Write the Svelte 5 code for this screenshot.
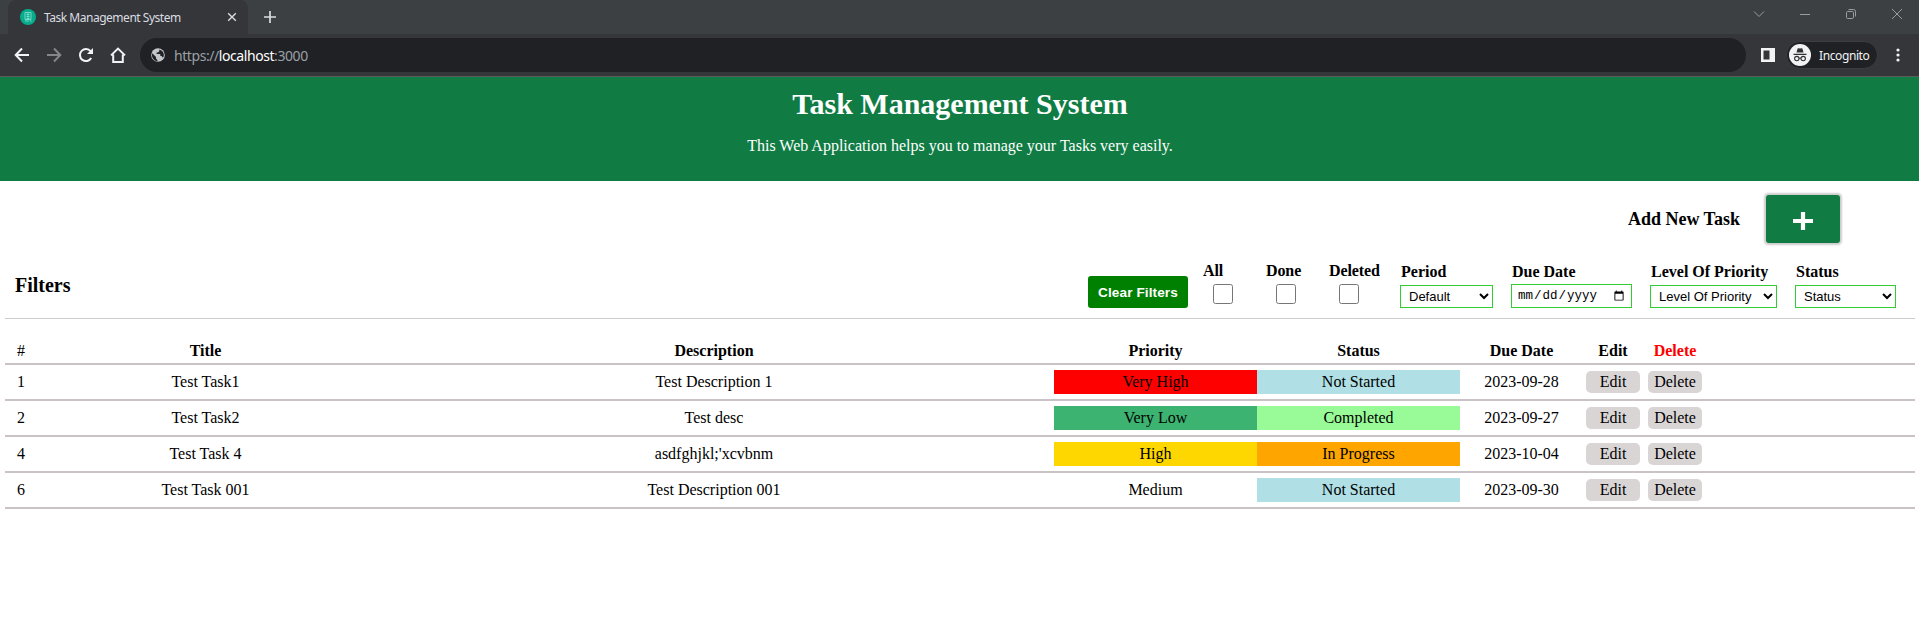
<script>
  const tasks = [
    { id: 1, title: 'Test Task1', description: 'Test Description 1', priority: 'Very High', status: 'Not Started', due: '2023-09-28' },
    { id: 2, title: 'Test Task2', description: 'Test desc', priority: 'Very Low', status: 'Completed', due: '2023-09-27' },
    { id: 4, title: 'Test Task 4', description: "asdfghjkl;'xcvbnm", priority: 'High', status: 'In Progress', due: '2023-10-04' },
    { id: 6, title: 'Test Task 001', description: 'Test Description 001', priority: 'Medium', status: 'Not Started', due: '2023-09-30' }
  ];
  const checks = ['All', 'Done', 'Deleted'];
  const slug = (s) => s.toLowerCase().replace(' ', '-');
</script>

<div class="tabstrip">
  <div class="tab">
    <svg class="favicon" width="16" height="16" viewBox="0 0 16 16"><circle cx="8" cy="8" r="8" fill="#06ac8c" /><path d="M5 3.5h6v7H5zM6.5 5.5h3M6.5 7.5h3M6.5 9.5h3M5 12h4M10 11.5l1.5 1M8 3.500v7" fill="none" stroke="#7fdccb" stroke-width=".9" /></svg>
    <span class="tab-title">Task Management System</span>
    <svg class="tab-close" width="10" height="10" viewBox="0 0 10 10"><path d="M1.2 1.2l7.6 7.6M8.8 1.2L1.2 8.8" stroke="#dadce0" stroke-width="1.4" /></svg>
  </div>
  <svg class="newtab" width="12" height="12" viewBox="0 0 12 12"><path d="M6 0v12M0 6h12" stroke="#dadce0" stroke-width="1.7" /></svg>
  <div class="controls">
    <svg width="12" height="12" viewBox="0 0 12 12"><path d="M1 3.5l5 5 5-5" /></svg>
    <svg width="12" height="12" viewBox="0 0 12 12"><path d="M1 6.5h10" /></svg>
    <svg width="12" height="12" viewBox="0 0 12 12"><rect x="1.5" y="3.5" width="7" height="7" rx="1.2" /><path d="M3.5 1.5H8.500a2 2 0 0 1 2 2V8.500" /></svg>
    <svg width="12" height="12" viewBox="0 0 12 12"><path d="M1 1l10 10M11 1L1 11" /></svg>
  </div>
</div>
<div class="toolbar">
  <svg class="nav" width="16" height="16" viewBox="0 0 16 16"><path d="M15 8H2M8 1.500L1.700 8 8 14.500" /></svg>
  <svg class="nav dim" width="16" height="16" viewBox="0 0 16 16"><path d="M1 8h13M8 1.500L14.300 8 8 14.500" /></svg>
  <svg class="nav" width="16" height="16" viewBox="0 0 16 16"><path d="M13.200 11A6 6 0 1 1 12.600 4.200" /><path d="M15 1v6H9z" fill="#f1f3f4" stroke="none" /></svg>
  <svg class="nav" width="16" height="16" viewBox="0 0 16 16"><path d="M1 8.400L8 1.600l7 6.800M3.200 7.500V15h9.600V7.500" /></svg>
  <div class="omnibox">
    <svg width="14" height="14" viewBox="0 0 14 14"><circle cx="7" cy="7" r="6.800" fill="#c4c7ca" /><path d="M1.300 5.300L5 9v1.400l1.500 1.800v1A6 6 0 0 1 1.300 5.300zM8.300 1.500v1.700L7 4.500H5.600V6h3.700v2h1.300l1.300 1.800c1.800-2.400 1.300-6.600-3.600-8.300z" fill="#202124" /></svg>
    <span class="url">https://<b>localhost</b>:3000</span>
  </div>
  <svg class="panel" width="14" height="14" viewBox="0 0 14 14"><path d="M0 0h14v14H0zM2.500 2.500v9h6v-9z" fill="#f1f3f4" fill-rule="evenodd" /></svg>
  <div class="profile">
    <svg width="22" height="22" viewBox="0 0 22 22"><circle cx="11" cy="11" r="11" fill="#f1f3f4" /><path d="M7.500 8.500L8.500 4.700q.2-.7 1-.5L11 4.600l1.500-.4q.8-.2 1 .5l1 3.800zM4.500 9.700h13v1.200h-13z" fill="#303134" /><g fill="none" stroke="#303134" stroke-width="1.100"><circle cx="7.800" cy="14.600" r="2.200" /><circle cx="14.200" cy="14.600" r="2.200" /><path d="M10 14.400q1-.7 2 0" /></g></svg>
    <span>Incognito</span>
  </div>
  <svg class="more" width="4" height="14" viewBox="0 0 4 14" fill="#f1f3f4"><circle cx="2" cy="2" r="1.600" /><circle cx="2" cy="7" r="1.600" /><circle cx="2" cy="12" r="1.600" /></svg>
</div>

<header>
  <h1>Task Management System</h1>
  <p>This Web Application helps you to manage your Tasks very easily.</p>
</header>

<main>
  <div class="add">
    <h3>Add New Task</h3>
    <button aria-label="Add"><svg width="20" height="18" viewBox="0 0 20 18"><path d="M10 0v18M0 9h20" stroke="#fff" stroke-width="4.200" /></svg></button>
  </div>

  <section class="filters">
    <h3>Filters</h3>
    <button class="clear">Clear Filters</button>
    {#each checks as c}
      <label class="check"><span>{c}</span><input type="checkbox" /></label>
    {/each}
    <label class="field period"><span>Period</span><select><option>Default</option></select></label>
    <label class="field date"><span>Due Date</span><input type="date" /></label>
    <label class="field level"><span>Level Of Priority</span><select><option>Level Of Priority</option></select></label>
    <label class="field status"><span>Status</span><select><option>Status</option></select></label>
  </section>

  <div class="table">
    <div class="row head">
      <span>#</span><b>Title</b><b>Description</b><b>Priority</b><b>Status</b><b>Due Date</b><b>Edit</b><b class="red">Delete</b>
    </div>
    {#each tasks as t}
      <div class="row">
        <span>{t.id}</span>
        <span>{t.title}</span>
        <span>{t.description}</span>
        <span class={slug(t.priority)}>{t.priority}</span>
        <span class={slug(t.status)}>{t.status}</span>
        <span>{t.due}</span>
        <button>Edit</button>
        <button>Delete</button>
      </div>
    {/each}
  </div>
</main>

<style>
  :global(body) { margin: 0; background: #fff; overflow: hidden; }
  :global(#app) { font-family: "Liberation Serif", serif; font-size: 16px; color: #000; }
  svg { display: block; flex: none; }
  h1, h3, p { margin: 0; }

  .tabstrip { height: 34px; background: #3c4043; display: flex; font-family: "Noto Sans", sans-serif; }
  .tab { box-sizing: border-box; width: 240px; height: 34px; margin-left: 8px; padding: 0 11px 0 12px; background: #35363a; border-radius: 8px 8px 0 0; display: flex; align-items: center; }
  .tab-title { margin-left: 8px; font-size: 12px; letter-spacing: -.48px; color: #dadce0; white-space: nowrap; flex: 1; }
  .newtab { margin: 11px 0 0 16px; }
  .controls { margin-left: auto; padding: 8px 16px 0 0; display: flex; gap: 34px; }
  .controls svg { fill: none; stroke: #9a9da0; stroke-width: 1; }

  .toolbar { box-sizing: border-box; height: 43px; background: #35363a; border-bottom: 1px solid #5b5c60; display: flex; align-items: center; padding-left: 14px; font-family: "Noto Sans", sans-serif; }
  .nav { fill: none; stroke: #f1f3f4; stroke-width: 2; margin-right: 16px; }
  .dim { stroke: #85868a; }
  .omnibox { box-sizing: border-box; width: 1606px; height: 34px; margin-left: -2px; border-radius: 17px; background: #202124; display: flex; align-items: center; padding-left: 11px; }
  .url { margin-left: 9px; font-size: 14px; letter-spacing: -.43px; color: #9aa0a6; }
  .url b { color: #fff; font-weight: 400; }
  .panel { margin-left: 15px; }
  .profile { box-sizing: border-box; width: 92px; height: 28px; margin-left: 11px; padding-left: 2px; border-radius: 14px; border: 1px solid #3c3d41; background: #202124; display: flex; align-items: center; gap: 8px; color: #f1f3f4; font-size: 12px; letter-spacing: -.4px; }
  .more { margin-left: 18px; }

  header { height: 104px; box-sizing: border-box; background: #107c44; color: #fff; text-align: center; padding: 10px 0 0 1px; }
  h1 { font-size: 30px; line-height: 34px; }
  header p { margin-top: 16px; line-height: 18px; }

  .add { display: flex; justify-content: flex-end; align-items: center; padding: 14px 79px 0 0; height: 48px; }
  .add h3 { font-size: 18px; margin-right: 26px; }
  .add button { width: 74px; height: 48px; padding: 4px 0 0; border: 0; border-radius: 3px; background: #107c44; box-shadow: 0 0 2px 1.500px #ccc; display: flex; align-items: center; justify-content: center; }

  .filters { box-sizing: border-box; height: 76px; margin: 0 4px 0 5px; padding: 0 19px 10px 0; border-bottom: 1px solid #ccc; display: flex; align-items: flex-end; }
  .filters h3 { font-size: 20px; line-height: 22px; margin: 0 auto 12px 10px; }
  .clear { width: 100px; height: 32px; padding: 0; margin-right: 15px; border: 0; border-radius: 3px; background: green; color: #fff; font: bold 13.600px "Liberation Sans", sans-serif; letter-spacing: .1px; }
  .check { width: 63px; height: 46px; display: flex; flex-direction: column; font-weight: bold; letter-spacing: -.1px; }
  .check span { line-height: 18px; }
  .check input { width: 20px; height: 20px; margin: 4px 0 0 10px; }
  .field { display: flex; flex-direction: column; font-weight: bold; margin-left: 18px; }
  .field span { line-height: 18px; padding: 0 0 4px 1px; white-space: nowrap; }
  .field select, .field input { box-sizing: border-box; height: 23px; border: 1px solid limegreen; border-radius: 0; background: #fff; color: #000; font: 13px "Liberation Sans", sans-serif; padding-left: 4px; }
  .field.period { width: 93px; margin-left: 8px; }
  .date { width: 121px; }
  .field.date span { padding-bottom: 3px; }
  .field.date input { height: 24px; padding: 0 4px 0 5px; font-family: "Liberation Mono", monospace; font-size: 12.500px; }
  .level { width: 127px; }
  .status { width: 101px; }

  .table { margin: 20px 4px 0 5px; }
  .row { display: grid; grid-template-columns: 32px 337px 680px 203px 203px 123px 62px 62px; padding: 5px 0; border-bottom: 2px solid #c9c3c5; text-align: center; line-height: 24px; align-items: center; }
  .head { padding: 0 0 1px; height: 23px; }
  .red { color: red; }
  .row button { width: 54px; height: 22px; padding: 0; margin-left: 3px; border: 0; border-radius: 5px; background: #d9d5d5; color: #000; font: 16px "Liberation Serif", serif; }
  .head b:nth-child(n+7) { padding-right: 2px; }
  .very-high { background: red; }
  .very-low { background: mediumseagreen; }
  .high { background: gold; }
  .not-started { background: powderblue; }
  .completed { background: palegreen; }
  .in-progress { background: orange; }
</style>
